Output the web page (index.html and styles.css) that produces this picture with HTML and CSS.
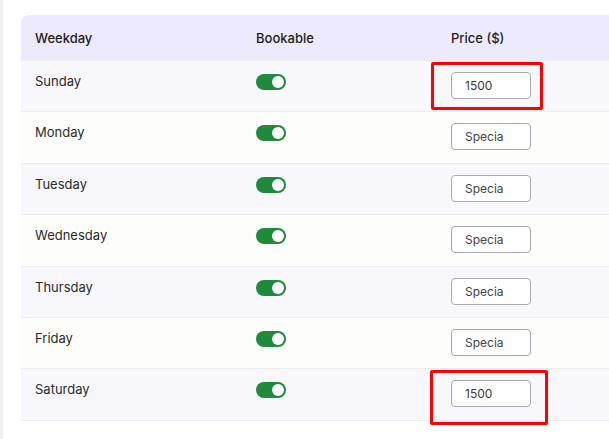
FILE: index.html
```html
<!DOCTYPE html>
<html lang="en">

<head>
    <meta charset="UTF-8">
    <meta name="viewport" content="width=device-width, initial-scale=1.0">
    <title>Weekday Pricing</title>
    <link rel="stylesheet" href="styles.css">
</head>

<body>
    <div class="page">
        <table class="price-table">
            <thead>
                <tr>
                    <th class="col-day">Weekday</th>
                    <th class="col-book">Bookable</th>
                    <th class="col-price">Price ($)</th>
                </tr>
            </thead>
            <tbody>
                <tr>
                    <td>Sunday</td>
                    <td><span class="toggle"></span></td>
                    <td class="price-cell">
                        <input type="text" class="price-input" value="1500">
                        <div class="highlight highlight-sun"></div>
                    </td>
                </tr>
                <tr>
                    <td>Monday</td>
                    <td><span class="toggle"></span></td>
                    <td class="price-cell"><input type="text" class="price-input" placeholder="Specia"></td>
                </tr>
                <tr>
                    <td>Tuesday</td>
                    <td><span class="toggle"></span></td>
                    <td class="price-cell"><input type="text" class="price-input" placeholder="Specia"></td>
                </tr>
                <tr>
                    <td>Wednesday</td>
                    <td><span class="toggle"></span></td>
                    <td class="price-cell"><input type="text" class="price-input" placeholder="Specia"></td>
                </tr>
                <tr>
                    <td>Thursday</td>
                    <td><span class="toggle"></span></td>
                    <td class="price-cell"><input type="text" class="price-input" placeholder="Specia"></td>
                </tr>
                <tr>
                    <td>Friday</td>
                    <td><span class="toggle"></span></td>
                    <td class="price-cell"><input type="text" class="price-input" placeholder="Specia"></td>
                </tr>
                <tr>
                    <td>Saturday</td>
                    <td><span class="toggle"></span></td>
                    <td class="price-cell">
                        <input type="text" class="price-input" value="1500">
                        <div class="highlight highlight-sat"></div>
                    </td>
                </tr>
            </tbody>
        </table>
    </div>
</body>

</html>
```

FILE: styles.css
```css
html,
body {
    margin: 0;
    height: 100%;
    overflow: hidden;
    background-color: #fff;
}

body {
    font-family: Inter, "Noto Sans", Arial, sans-serif;
    color: #222;
}

.page {
    border-left: 3px solid #f1f1f1;
    height: 100%;
    padding: 15px 0 0 18px;
    box-sizing: border-box;
    overflow: hidden;
}

.price-table {
    border-collapse: separate;
    border-spacing: 0;
    width: 640px;
    table-layout: fixed;
}

.price-table th {
    background-color: #eeeafd;
    text-align: left;
    font-size: 13px;
    font-weight: 500;
    color: #1d1d1d;
    height: 45px;
    padding: 0 14px;
    border-bottom: 1px solid #ecebf0;
}

.price-table th:first-child {
    border-top-left-radius: 8px;
}

.col-day {
    width: 193px;
}

.col-book {
    width: 167px;
}

.price-table td {
    font-size: 13px;
    color: #2b2b2b;
    height: 51.4px;
    padding: 0 14px;
    box-sizing: border-box;
    vertical-align: top;
    line-height: 18px;
    padding-top: 11px;
    border-bottom: 1px solid #ededed;
}

.price-table tbody tr:nth-child(odd) td {
    background-color: #f7f7fc;
}

.price-table tbody tr:nth-child(even) td {
    background-color: #fdfdfb;
}

/* Toggle switch */
.toggle {
    display: inline-block;
    position: relative;
    width: 30px;
    height: 16px;
    margin-top: 2px;
    border-radius: 8px;
    background-color: #1f8a3b;
}

.toggle::after {
    content: "";
    position: absolute;
    top: 2px;
    right: 2px;
    width: 12px;
    height: 12px;
    border-radius: 50%;
    background-color: #fff;
}

.price-cell {
    position: relative;
}

.price-input {
    display: block;
    width: 80px;
    height: 27px;
    padding: 0 13px;
    box-sizing: border-box;
    border: 1px solid #a9a9ae;
    border-radius: 4px;
    background-color: #fff;
    font-family: Inter, "Noto Sans", Arial, sans-serif;
    font-size: 12px;
    color: #3a3a3a;
}

.price-input::placeholder {
    color: #444;
}

/* Annotation boxes */
.highlight {
    position: absolute;
    border: 3px solid #f00;
    box-sizing: border-box;
    border-radius: 2px;
}

.highlight-sun {
    left: -6px;
    top: 1px;
    width: 112px;
    height: 48px;
}

.highlight-sat {
    left: -7px;
    top: 1px;
    width: 118px;
    height: 55px;
}
```
